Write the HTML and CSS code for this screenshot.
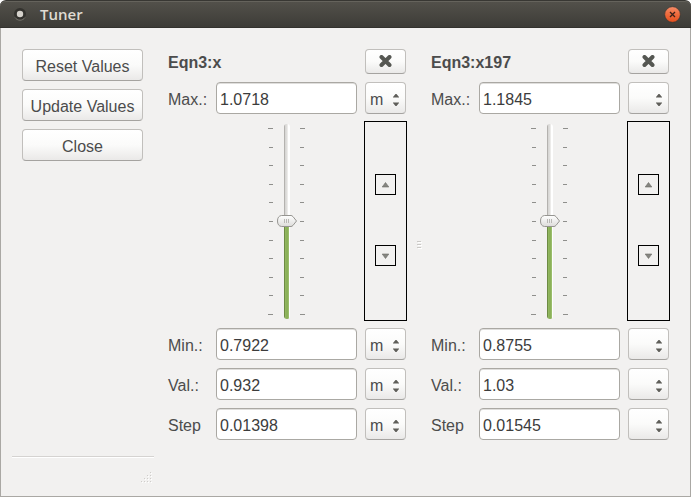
FILE: index.html
```html
<!DOCTYPE html>
<html lang="en">
<head>
<meta charset="utf-8">
<title>Tuner</title>
<link rel="stylesheet" href="styles.css">
</head>
<body>
<div class="window">
  <header class="titlebar">
    <svg class="app-icon" width="14" height="14" viewBox="0 0 14 14" aria-hidden="true">
      <circle cx="7" cy="7" r="6" fill="#33322e"/>
      <path d="M2 10.500a6 6 0 0 0 10 0" fill="none" stroke="#77756e"/>
      <circle cx="7" cy="7" r="3.200" fill="#d5d2cc"/>
    </svg>
    <h1 class="title">Tuner</h1>
    <button class="window-close" type="button" aria-label="Close window">
      <svg width="17" height="17" viewBox="0 0 17 17" aria-hidden="true">
        <defs><linearGradient id="orange" x2="0" y2="1"><stop stop-color="#f58d69"/><stop offset=".5" stop-color="#ee6a3c"/><stop offset="1" stop-color="#e5501e"/></linearGradient></defs>
        <circle cx="8.500" cy="8.500" r="7.800" fill="url(#orange)" stroke="#34332f" stroke-width=".6"/>
        <path d="M6 6l5 5M11 6l-5 5" stroke="#3a2119" stroke-width="1.300"/>
      </svg>
    </button>
  </header>
  <div class="content">
    <aside class="side">
      <div class="actions">
        <button class="btn" type="button">Reset Values</button>
        <button class="btn" type="button">Update Values</button>
        <button class="btn" type="button">Close</button>
      </div>
      <div class="status">
        <svg width="12" height="12" viewBox="0 0 12 12" aria-hidden="true">
          <path d="M10 1h1v1h-1zM7 4h1v1h-1zM10 4h1v1h-1zM4 7h1v1h-1zM7 7h1v1h-1zM10 7h1v1h-1zM1 10h1v1h-1zM4 10h1v1h-1zM7 10h1v1h-1zM10 10h1v1h-1z" fill="#fff"/>
          <path d="M9 0h1v1h-1zM6 3h1v1h-1zM9 3h1v1h-1zM3 6h1v1h-1zM6 6h1v1h-1zM9 6h1v1h-1zM0 9h1v1h-1zM3 9h1v1h-1zM6 9h1v1h-1zM9 9h1v1h-1z" fill="#cfcdca"/>
        </svg>
      </div>
    </aside>
    <main class="tuners">
      <section class="tuner">
        <h2 class="name">Eqn3:x</h2>
        <button class="btn remove" type="button" aria-label="Remove Eqn3:x">
          <svg width="13" height="13" viewBox="0 0 13 13" aria-hidden="true"><path d="M2.500 2l8 8M10.500 2l-8 8" stroke="#555752" stroke-width="4" stroke-linecap="round"/></svg>
        </button>
        <label for="a-max">Max.:</label>
        <input class="entry" id="a-max" type="text" value="1.0718">
        <select class="unit" aria-label="Max unit"><option>m</option></select>
        <div class="slider">
          <svg class="ticks" width="6" height="187" viewBox="0 0 6 187" aria-hidden="true"><path d="M0 .5h5M1 19.500h4M1 37.500h4M1 56.500h4M1 74.500h4M1 93.500h4M1 112.500h4M1 130.500h4M1 149.500h4M1 167.500h4M0 186.500h5" stroke="#8f8f8c"/></svg>
          <input class="range" type="range" aria-label="Eqn3:x value" min="0" max="100" value="50">
          <svg class="ticks" width="6" height="187" viewBox="0 0 6 187" aria-hidden="true"><path d="M0 .5h5M0 19.500h4M0 37.500h4M0 56.500h4M0 74.500h4M0 93.500h4M0 112.500h4M0 130.500h4M0 149.500h4M0 167.500h4M0 186.500h5" stroke="#8f8f8c"/></svg>
        </div>
        <div class="stepper">
          <button class="step" type="button" aria-label="Step up"><svg width="7" height="6" viewBox="0 0 7 6" aria-hidden="true"><path d="M3.500 0.500L6.800 5H.2z" fill="#858580" stroke="#6b6b67" stroke-width=".6"/></svg></button>
          <button class="step" type="button" aria-label="Step down"><svg width="7" height="6" viewBox="0 0 7 6" aria-hidden="true"><path d="M3.500 5.500L6.800 1H.2z" fill="#858580" stroke="#6b6b67" stroke-width=".6"/></svg></button>
        </div>
        <label for="a-min">Min.:</label>
        <input class="entry" id="a-min" type="text" value="0.7922">
        <select class="unit" aria-label="Min unit"><option>m</option></select>
        <label for="a-val">Val.:</label>
        <input class="entry" id="a-val" type="text" value="0.932">
        <select class="unit" aria-label="Value unit"><option>m</option></select>
        <label for="a-step">Step</label>
        <input class="entry" id="a-step" type="text" value="0.01398">
        <select class="unit" aria-label="Step unit"><option>m</option></select>
      </section>
      <div class="splitter">
        <svg width="5" height="9" viewBox="0 0 5 9" aria-hidden="true"><path d="M1 1.500h4M1 4.500h4M1 7.500h4" stroke="#fff"/><path d="M0 .5h4M0 3.500h4M0 6.500h4" stroke="#cbc9c6"/></svg>
      </div>
      <section class="tuner">
        <h2 class="name">Eqn3:x197</h2>
        <button class="btn remove" type="button" aria-label="Remove Eqn3:x197">
          <svg width="13" height="13" viewBox="0 0 13 13" aria-hidden="true"><path d="M2.500 2l8 8M10.500 2l-8 8" stroke="#555752" stroke-width="4" stroke-linecap="round"/></svg>
        </button>
        <label for="b-max">Max.:</label>
        <input class="entry" id="b-max" type="text" value="1.1845">
        <select class="unit" aria-label="Max unit"><option></option></select>
        <div class="slider">
          <svg class="ticks" width="6" height="187" viewBox="0 0 6 187" aria-hidden="true"><path d="M0 .5h5M1 19.500h4M1 37.500h4M1 56.500h4M1 74.500h4M1 93.500h4M1 112.500h4M1 130.500h4M1 149.500h4M1 167.500h4M0 186.500h5" stroke="#8f8f8c"/></svg>
          <input class="range" type="range" aria-label="Eqn3:x197 value" min="0" max="100" value="50">
          <svg class="ticks" width="6" height="187" viewBox="0 0 6 187" aria-hidden="true"><path d="M0 .5h5M0 19.500h4M0 37.500h4M0 56.500h4M0 74.500h4M0 93.500h4M0 112.500h4M0 130.500h4M0 149.500h4M0 167.500h4M0 186.500h5" stroke="#8f8f8c"/></svg>
        </div>
        <div class="stepper">
          <button class="step" type="button" aria-label="Step up"><svg width="7" height="6" viewBox="0 0 7 6" aria-hidden="true"><path d="M3.500 0.500L6.800 5H.2z" fill="#858580" stroke="#6b6b67" stroke-width=".6"/></svg></button>
          <button class="step" type="button" aria-label="Step down"><svg width="7" height="6" viewBox="0 0 7 6" aria-hidden="true"><path d="M3.500 5.500L6.800 1H.2z" fill="#858580" stroke="#6b6b67" stroke-width=".6"/></svg></button>
        </div>
        <label for="b-min">Min.:</label>
        <input class="entry" id="b-min" type="text" value="0.8755">
        <select class="unit" aria-label="Min unit"><option></option></select>
        <label for="b-val">Val.:</label>
        <input class="entry" id="b-val" type="text" value="1.03">
        <select class="unit" aria-label="Value unit"><option></option></select>
        <label for="b-step">Step</label>
        <input class="entry" id="b-step" type="text" value="0.01545">
        <select class="unit" aria-label="Step unit"><option></option></select>
      </section>
    </main>
  </div>
</div>
</body>
</html>
```
FILE: styles.css
```css
* {
  box-sizing: border-box;
}

body {
  margin: 0;
  background: #fff;
  color: #4c4c4c;
  font: 16px/20px "Liberation Sans", Arial, sans-serif;
}

h1,
h2 {
  margin: 0;
}

svg {
  display: block;
}

button,
input,
select {
  margin: 0;
  color: inherit;
  font: inherit;
}

.window {
  display: flex;
  flex-direction: column;
  min-height: 100vh;
}

/* Title bar */
.titlebar {
  display: flex;
  align-items: center;
  height: 28px;
  padding: 0 10px 0 13px;
  border-top: 1px solid #383733;
  border-bottom: 1px solid #33322e;
  border-radius: 6px 6px 0 0;
  background: linear-gradient(#53514b, #3d3c37);
  box-shadow: inset 0 1px #65635c;
}

.title {
  flex: 1;
  margin-left: 13px;
  color: #dfdbd2;
  font: 600 15px/20px "Open Sans", "Noto Sans", sans-serif;
}

.window-close {
  padding: 0;
  border: 0;
  background: none;
}

.content {
  display: grid;
  grid-template-columns: 153px 1fr;
  flex: 1;
  border: 1px solid #aaa8a4;
  border-top: 0;
  background: #f2f1f0;
}

/* Side panel */
.side {
  display: flex;
  flex-direction: column;
  justify-content: space-between;
}

.actions {
  display: grid;
  gap: 8px;
  padding: 21px 11px 0 21px;
}

.btn {
  height: 32px;
  padding: 3px 0 0;
  border: 1px solid #c1bfbc;
  border-bottom-color: #a5a3a0;
  border-radius: 4px;
  background: linear-gradient(#fff, #fbfbfa 50%, #eae9e8);
}

.status {
  display: flex;
  justify-content: flex-end;
  height: 40px;
  margin-left: 11px;
  padding: 15px 1px 0;
  border-top: 1px solid #d5d3d1;
  box-shadow: inset 0 1px #fff;
}

/* Tuner columns */
.tuners {
  display: grid;
  grid-template-columns: 1fr 25px 1fr;
  padding: 21px 21px 0 14px;
}

.tuner {
  display: grid;
  grid-template-columns: 40px 1fr 41px;
  grid-template-rows: 25px 32px 198px repeat(3, 32px);
  gap: 8px;
  align-items: center;
  min-width: 0;
}

.name {
  grid-column: 1 / 3;
  padding-top: 2px;
  font-size: 16px;
  line-height: 20px;
}

.remove {
  display: grid;
  place-items: center;
  height: 25px;
  padding: 0;
}

.tuner label {
  padding-top: 3px;
}

.entry {
  width: 100%;
  min-width: 0;
  height: 32px;
  padding: 3px 3px 0;
  border: 1px solid #aaa8a3;
  border-radius: 4px;
  background: #fff;
  box-shadow: inset 0 1px #dfdedc;
  color: #3c3c3c;
}

.unit {
  appearance: none;
  width: 100%;
  height: 32px;
  padding: 3px 0 0 4px;
  border: 1px solid #c1bfbc;
  border-bottom-color: #a5a3a0;
  border-radius: 4px;
  background:
    url("data:image/svg+xml,%3Csvg xmlns='http://www.w3.org/2000/svg' width='6' height='12'%3E%3Cpath d='M0 3.500V3L2.500 0h1L6 3v.5zM0 8.500V9l2.500 3h1L6 9v-.5z' fill='%235f5e59'/%3E%3C/svg%3E") no-repeat right 6px top 11px,
    linear-gradient(#fff, #fbfbfa 50%, #eae9e8);
}

/* Slider */
.slider {
  display: flex;
  grid-column: 2;
  align-items: center;
  justify-content: center;
  height: 198px;
}

.range {
  appearance: none;
  writing-mode: vertical-lr;
  direction: rtl;
  width: 20px;
  height: 195px;
  margin: 0 3px;
  background: none;
}

.range::-webkit-slider-runnable-track {
  width: 6px;
  height: 195px;
  margin: 0 7px;
  border-radius: 3px;
  background:
    linear-gradient(90deg, #6d8b43 1px, #91b660 1px 2px, #8bb158 2px 4px, #9abd6c 4px 5px, #6d8b43 5px) no-repeat 0 98px / 5px 97px,
    linear-gradient(90deg, #b4b2af 1px, #d8d7d5 1px 2px, #e5e4e2 3px, #f3f2f1 4px, #fff 4px);
}

.range::-webkit-slider-thumb {
  appearance: none;
  width: 20px;
  height: 12px;
  margin-left: -7px;
  border: 0;
  background: url("data:image/svg+xml,%3Csvg xmlns='http://www.w3.org/2000/svg' width='20' height='12'%3E%3Cdefs%3E%3ClinearGradient id='g' x2='0' y2='1'%3E%3Cstop stop-color='%23fff'/%3E%3Cstop offset='1' stop-color='%23dddcda'/%3E%3C/linearGradient%3E%3C/defs%3E%3Cpath d='M4.500.5H14Q15 .5 16 1.600L19.500 6 16 10.400Q15 11.500 14 11.500H4.500Q.5 11 .5 6T4.500.5z' fill='url(%23g)' stroke='%23969591'/%3E%3Cpath d='M7.500 4v4M9.500 4v4M11.500 4v4' stroke='%23b9b8b5'/%3E%3C/svg%3E") no-repeat;
}

/* Stepper */
.stepper {
  display: flex;
  flex-direction: column;
  gap: 50px;
  align-items: center;
  justify-content: center;
  height: 200px;
  margin: -1px;
  padding-bottom: 2px;
  border: 1px solid #000;
}

.step {
  display: grid;
  place-items: center;
  width: 21px;
  height: 21px;
  padding: 0;
  border: 1px solid #000;
  background: none;
}

.splitter {
  display: grid;
  align-self: start;
  place-items: center;
  height: 392px;
  padding-left: 2px;
}
```
